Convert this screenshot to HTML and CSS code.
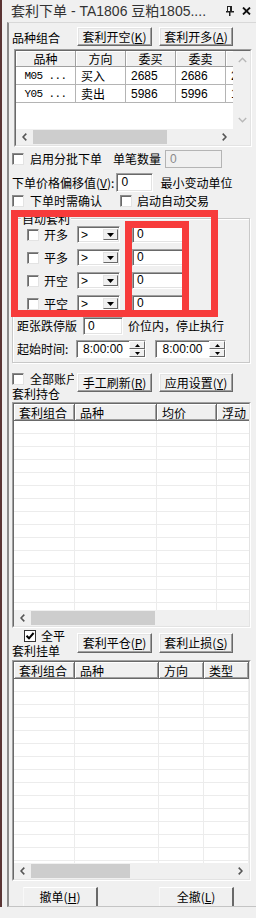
FILE: index.html
```html
<!DOCTYPE html>
<html lang="zh-CN">
<head>
  <meta charset="UTF-8">
  <meta name="viewport" content="width=device-width, initial-scale=1.0">
  <title>套利下单</title>
  <link rel="stylesheet" href="styles.css">
</head>
<body>

  <div class="window">
    <div class="frame">
      <div class="titlebar">
        <span class="title">套利下单 - TA1806 豆粕1805....</span>
        <svg class="pin" width="8" height="10" viewBox="0 0 8 10">
          <rect x="1.5" y="0.5" width="4" height="5" fill="none" stroke="#222"/>
          <rect x="4" y="0" width="2" height="6" fill="#222"/>
          <rect x="0" y="5" width="8" height="1.5" fill="#222"/>
          <rect x="3" y="6" width="1.5" height="4" fill="#222"/>
        </svg>
        <svg class="close" width="9" height="8" viewBox="0 0 9 8">
          <path d="M1 0.5 L8 7.5 M8 0.5 L1 7.5" stroke="#111" stroke-width="1.8"/>
        </svg>
      </div>

      <div class="panel">
        <!-- 品种组合 -->
        <div class="toolbar">
          <span class="caption">品种组合</span>
          <button class="btn">套利开空(<u>K</u>)</button>
          <button class="btn">套利开多(<u>A</u>)</button>
        </div>

        <div class="grid grid-combo">
          <div class="grid-in">
            <div class="list">
              <div class="tr">
                <div class="th center">品种</div>
                <div class="th center">方向</div>
                <div class="th center">委买</div>
                <div class="th center">委卖</div>
                <div class="th"></div>
              </div>
              <div class="tr">
                <div class="td mono center">M05 ...</div>
                <div class="td">买入</div>
                <div class="td num">2685</div>
                <div class="td num">2686</div>
                <div class="td num">2</div>
              </div>
              <div class="tr">
                <div class="td mono center">Y05 ...</div>
                <div class="td">卖出</div>
                <div class="td num">5986</div>
                <div class="td num">5996</div>
                <div class="td num">1</div>
              </div>
            </div>
            <div class="vscroll">
              <svg width="9" height="6" viewBox="0 0 9 6"><polyline points="0.8,5 4.5,1.3 8.2,5" fill="none" stroke="#b8b8b8" stroke-width="1.4"/></svg>
              <svg width="9" height="6" viewBox="0 0 9 6"><polyline points="0.8,1 4.5,4.7 8.2,1" fill="none" stroke="#b8b8b8" stroke-width="1.4"/></svg>
            </div>
            <div class="hscroll">
              <span class="arrow"><svg width="5" height="8" viewBox="0 0 5 8"><polyline points="4.3,0.6 1,4 4.3,7.4" fill="none" stroke="#555" stroke-width="1.6"/></svg></span>
              <span class="track"><span class="thumb" style="width: 134px"></span></span>
              <span class="arrow"><svg width="5" height="8" viewBox="0 0 5 8"><polyline points="0.7,0.6 4,4 0.7,7.4" fill="none" stroke="#555" stroke-width="1.6"/></svg></span>
            </div>
            <div class="corner"></div>
          </div>
        </div>

        <div class="row row-batch">
          <span class="chk"></span>
          <span class="text batch-label">启用分批下单</span>
          <span class="text">单笔数量</span>
          <span class="input disabled batch-input">0</span>
        </div>

        <div class="row row-offset">
          <span class="text">下单价格偏移值(<u>V</u>):</span>
          <span class="input offset-input">0</span>
          <span class="text">最小变动单位</span>
        </div>

        <div class="row row-confirm">
          <span class="check-item confirm-item"><span class="chk"></span><span class="text">下单时需确认</span></span>
          <span class="check-item"><span class="chk"></span><span class="text">启动自动交易</span></span>
        </div>

        <!-- 自动套利 -->
        <div class="group">
          <span class="legend">自动套利</span>
          <div class="arb-row">
            <span class="chk"></span><span class="text arb-label">开多</span>
            <span class="combo"><span class="combo-val">&gt;</span><span class="combo-btn"><svg width="7" height="4" viewBox="0 0 7 4"><path d="M0 0 H7 L3.5 4 Z" fill="#000"/></svg></span></span>
            <span class="input arb-input">0</span>
          </div>
          <div class="arb-row">
            <span class="chk"></span><span class="text arb-label">平多</span>
            <span class="combo"><span class="combo-val">&gt;</span><span class="combo-btn"><svg width="7" height="4" viewBox="0 0 7 4"><path d="M0 0 H7 L3.5 4 Z" fill="#000"/></svg></span></span>
            <span class="input arb-input">0</span>
          </div>
          <div class="arb-row">
            <span class="chk"></span><span class="text arb-label">开空</span>
            <span class="combo"><span class="combo-val">&gt;</span><span class="combo-btn"><svg width="7" height="4" viewBox="0 0 7 4"><path d="M0 0 H7 L3.5 4 Z" fill="#000"/></svg></span></span>
            <span class="input arb-input">0</span>
          </div>
          <div class="arb-row">
            <span class="chk"></span><span class="text arb-label">平空</span>
            <span class="combo"><span class="combo-val">&gt;</span><span class="combo-btn"><svg width="7" height="4" viewBox="0 0 7 4"><path d="M0 0 H7 L3.5 4 Z" fill="#000"/></svg></span></span>
            <span class="input arb-input">0</span>
          </div>
          <div class="row row-limit">
            <span class="text limit-label">距张跌停版</span>
            <span class="input limit-input">0</span>
            <span class="text">价位内，停止执行</span>
          </div>
          <div class="row row-time">
            <span class="text time-label">起始时间:</span>
            <span class="spin">
              <span class="spin-val">8:00:00</span>
              <span class="spin-btns">
                <span class="spin-btn"><svg width="5" height="3" viewBox="0 0 5 3"><path d="M0 3 H5 L2.5 0 Z" fill="#000"/></svg></span>
                <span class="spin-btn"><svg width="5" height="3" viewBox="0 0 5 3"><path d="M0 0 H5 L2.5 3 Z" fill="#000"/></svg></span>
              </span>
            </span>
            <span class="spin spin-end">
              <span class="spin-val">8:00:00</span>
              <span class="spin-btns">
                <span class="spin-btn"><svg width="5" height="3" viewBox="0 0 5 3"><path d="M0 3 H5 L2.5 0 Z" fill="#000"/></svg></span>
                <span class="spin-btn"><svg width="5" height="3" viewBox="0 0 5 3"><path d="M0 0 H5 L2.5 3 Z" fill="#000"/></svg></span>
              </span>
            </span>
          </div>
        </div>

        <!-- 套利持仓 -->
        <div class="section-bar bar-hold">
          <div class="side">
            <div class="side-line"><span class="chk"></span><span class="text clip">全部账户</span></div>
            <div class="side-title">套利持仓</div>
          </div>
          <button class="btn">手工刷新(<u>R</u>)</button>
          <button class="btn">应用设置(<u>Y</u>)</button>
        </div>

        <div class="grid grid-table grid-hold">
          <div class="grid-in">
            <div class="tr">
              <div class="th">套利组合</div>
              <div class="th">品种</div>
              <div class="th">均价</div>
              <div class="th">浮动</div>
            </div>
            <div class="rows" data-rows="15" data-cols="4"></div>
            <div class="hscroll">
              <span class="arrow"><svg width="5" height="8" viewBox="0 0 5 8"><polyline points="4.3,0.6 1,4 4.3,7.4" fill="none" stroke="#555" stroke-width="1.6"/></svg></span>
              <span class="track"><span class="thumb" style="width: 124px"></span></span>
              <span class="arrow"><svg width="5" height="8" viewBox="0 0 5 8"><polyline points="0.7,0.6 4,4 0.7,7.4" fill="none" stroke="#555" stroke-width="1.6"/></svg></span>
            </div>
          </div>
        </div>

        <!-- 套利挂单 -->
        <div class="section-bar bar-order">
          <div class="side">
            <div class="side-line indent"><span class="chk checked"><svg width="10" height="10" viewBox="0 0 10 10"><path d="M1.5 4.8 L4 7.3 L8.6 2" fill="none" stroke="#000" stroke-width="2"/></svg></span><span class="text">全平</span></div>
            <div class="side-title">套利挂单</div>
          </div>
          <button class="btn btn-tall">套利平仓(<u>P</u>)</button>
          <button class="btn btn-tall">套利止损(<u>S</u>)</button>
        </div>

        <div class="grid grid-table grid-order">
          <div class="grid-in">
            <div class="tr">
              <div class="th">套利组合</div>
              <div class="th">品种</div>
              <div class="th">方向</div>
              <div class="th">类型</div>
            </div>
            <div class="rows" data-rows="15" data-cols="4"></div>
            <div class="hscroll">
              <span class="arrow"><svg width="5" height="8" viewBox="0 0 5 8"><polyline points="4.3,0.6 1,4 4.3,7.4" fill="none" stroke="#555" stroke-width="1.6"/></svg></span>
              <span class="track"><span class="thumb" style="width: 99px"></span></span>
              <span class="arrow"><svg width="5" height="8" viewBox="0 0 5 8"><polyline points="0.7,0.6 4,4 0.7,7.4" fill="none" stroke="#555" stroke-width="1.6"/></svg></span>
            </div>
          </div>
        </div>

        <div class="footer">
          <button class="btn btn-flat">撤单(<u>H</u>)</button>
          <button class="btn btn-flat">全撤(<u>L</u>)</button>
        </div>
      </div>
    </div>

    <!-- red marks drawn over the screenshot -->
    <div class="mark mark-outer"></div>
    <div class="mark mark-inner"></div>
  </div>

  <script>
    // Fill the empty grids with blank rows
    document.querySelectorAll('.rows').forEach(function (body) {
      const rows = parseInt(body.dataset.rows);
      const cols = parseInt(body.dataset.cols);
      for (let r = 0; r < rows; r++) {
        const tr = document.createElement('div');
        tr.className = 'tr';
        for (let c = 0; c < cols; c++) {
          const td = document.createElement('div');
          td.className = 'td';
          tr.appendChild(td);
        }
        body.appendChild(tr);
      }
    });
  </script>

</body>
</html>
```

FILE: styles.css
```css
* {
  box-sizing: border-box;
}
body {
  margin: 0;
  background-color: #f0f0f0;
  font-family: "Noto Sans CJK SC", sans-serif;
  font-size: 12px;
  line-height: 14px;
  color: #000;
}
u {
  text-decoration: underline;
}
.window {
  position: relative;
  width: 256px;
  height: 918px;
  overflow: hidden;
}
.frame {
  height: 907px;
  border-left: 2px solid #5a3434;
  display: flex;
  flex-direction: column;
}
.titlebar {
  height: 22px;
  display: flex;
  align-items: center;
  padding-left: 9px;
  font-family: "Liberation Sans", "Noto Sans CJK SC", sans-serif;
  font-size: 14px;
  line-height: 16px;
  color: #333;
}
.title {
  flex: 1;
  white-space: nowrap;
  overflow: hidden;
}
.pin {
  margin-right: 8px;
}
.close {
  margin-right: 5px;
}
.panel {
  flex: 1;
  margin-left: 5px;
  border-left: 2px solid #8c8c8c;
  border-top: 1px solid #d8d8d8;
  border-bottom: 1px solid #c4c4c4;
  padding-left: 3px;
  display: flex;
  flex-direction: column;
}

/* buttons */
.btn {
  width: 75px;
  height: 19px;
  padding: 0;
  font: inherit;
  color: #000;
  background-color: #f0f0f0;
  border: 1px solid;
  border-color: #fff #696969 #696969 #fff;
  box-shadow: inset -1px -1px #a0a0a0, inset 1px 1px #e3e3e3;
  white-space: nowrap;
}
.btn + .btn {
  margin-left: 7px;
  width: 74px;
}
.btn-tall {
  height: 20px;
}

/* small controls */
.text {
  white-space: nowrap;
}
.chk {
  display: inline-flex;
  align-items: center;
  justify-content: center;
  flex: none;
  width: 12px;
  height: 12px;
  background-color: #fff;
  border: 1px solid;
  border-color: #8a8a8a #e3e3e3 #e3e3e3 #8a8a8a;
  box-shadow: inset 1px 1px #6a6a6a;
}
.input {
  display: inline-block;
  height: 18px;
  padding: 1px 0 0 4px;
  background-color: #fff;
  border: 1px solid;
  border-color: #a0a0a0 #fff #fff #a0a0a0;
  box-shadow: inset 1px 1px #696969, inset -1px -1px #e3e3e3;
  font-family: "Liberation Sans", sans-serif;
}
.input.disabled {
  background-color: #f0f0f0;
  color: #8a8a8a;
  border-color: #b4b4b4;
  box-shadow: none;
}

/* toolbar */
.toolbar {
  display: flex;
  align-items: center;
  height: 19px;
  margin-top: 4px;
}
.caption {
  width: 65px;
  padding-top: 3px;
}

/* grids */
.grid {
  border: 1px solid;
  border-color: #a0a0a0 #fff #fff #a0a0a0;
}
.grid-in {
  height: 100%;
  background-color: #fff;
  border: 1px solid;
  border-color: #696969 #e3e3e3 #e3e3e3 #696969;
  overflow: hidden;
}
.tr {
  display: grid;
}
.th {
  height: 16px;
  padding-left: 5px;
  line-height: 15px;
  background-color: #f0f0f0;
  border-right: 1px solid #696969;
  border-bottom: 1px solid #696969;
  box-shadow: inset 1px 1px #fff, inset -1px -1px #a0a0a0;
  white-space: nowrap;
  overflow: hidden;
}
.th.center {
  padding-left: 0;
  text-align: center;
}
.td {
  height: 13px;
  border-right: 1px solid #ececec;
  border-bottom: 1px solid #ececec;
}

.grid-combo {
  width: 238px;
  height: 98px;
  margin-top: 3px;
  margin-left: 2px;
}
.grid-combo .grid-in {
  display: grid;
  grid-template-columns: 1fr 17px;
  grid-template-rows: 1fr 16px;
}
.grid-combo .tr {
  grid-template-columns: 60px 50px 50px 50px 30px;
}
.grid-combo .th {
  height: 16px;
  border-right-color: #a0a0a0;
  border-bottom-color: #a0a0a0;
  box-shadow: inset 1px 1px #fff;
}
.grid-combo .td {
  height: 18px;
  padding: 2px 0 0 5px;
  border-color: #b4b4b4;
}
.grid-combo .td.center {
  padding-left: 0;
  text-align: center;
}
.list {
  overflow: hidden;
}
.mono {
  font-family: "Liberation Mono", monospace;
  font-size: 11px;
  letter-spacing: -0.6px;
}
.num {
  font-family: "Liberation Sans", sans-serif;
  font-size: 12px;
}
.vscroll {
  background-color: #f0f0f0;
  display: flex;
  flex-direction: column;
  align-items: center;
  justify-content: space-between;
  padding: 6px 0 6px 1px;
}
.corner {
  background-color: #f0f0f0;
}
.hscroll {
  display: flex;
  height: 16px;
  background-color: #f0f0f0;
}
.arrow {
  width: 17px;
  display: flex;
  align-items: center;
  justify-content: center;
  flex: none;
}
.track {
  flex: 1;
  padding: 1px 0;
}
.thumb {
  display: block;
  height: 100%;
  background-color: #cdcdcd;
}

.grid-table {
  width: 239px;
  margin-left: 0;
}
.grid-table .grid-in {
  display: grid;
  grid-template-rows: 17px 1fr 16px;
}
.grid-table .th {
  height: 17px;
  padding-top: 1px;
}
.rows {
  overflow: hidden;
}
.grid-hold {
  height: 226px;
}
.grid-hold .tr {
  grid-template-columns: 61px 82px 60px 60px;
}
.grid-order {
  height: 221px;
}
.grid-order .tr {
  grid-template-columns: 61px 84px 45px 45px;
}

/* option rows */
.row {
  display: flex;
  align-items: center;
}
.row-batch {
  height: 18px;
  margin-top: 3px;
}
.batch-label {
  margin-left: 6px;
  width: 83px;
}
.batch-input {
  width: 57px;
  margin-left: 4px;
}
.row-offset {
  height: 19px;
  margin-top: 5px;
}
.offset-input {
  width: 37px;
  height: 19px;
  margin-left: 2px;
  margin-right: 7px;
}
.row-confirm {
  height: 16px;
  margin-top: 1px;
}
.check-item {
  display: flex;
  align-items: center;
}
.check-item .text {
  margin-left: 6px;
}
.confirm-item {
  width: 108px;
}
.check-item + .check-item .text {
  margin-left: 5px;
}

/* group box */
.group {
  position: relative;
  width: 238px;
  height: 145px;
  margin-top: 9px;
  padding: 7px 0 0 4px;
  border: 1px solid #c8c8c8;
  box-shadow: inset 1px 1px #fff, 1px 1px #fff;
}
.legend {
  position: absolute;
  top: -7px;
  left: 8px;
  padding: 0 1px;
  background-color: #f0f0f0;
}
.arb-row {
  display: flex;
  align-items: center;
  height: 17px;
  margin: 0 0 6px 10px;
}
.arb-row:nth-child(5) {
  margin-bottom: 0;
}
.arb-label {
  width: 33px;
  margin-left: 5px;
}
.combo {
  display: flex;
  width: 43px;
  height: 17px;
  padding: 2px;
  background-color: #fff;
  border: 1px solid;
  border-color: #a0a0a0 #fff #fff #a0a0a0;
  box-shadow: inset 1px 1px #696969, inset -1px -1px #e3e3e3;
}
.combo-val {
  flex: 1;
  font-family: "Liberation Sans", sans-serif;
  line-height: 12px;
  padding-left: 1px;
}
.combo-btn {
  width: 15px;
  display: flex;
  align-items: center;
  justify-content: center;
  background-color: #f0f0f0;
  border: 1px solid;
  border-color: #e3e3e3 #696969 #696969 #e3e3e3;
  margin-right: -1px;
}
.arb-input {
  width: 55px;
  height: 17px;
  margin-left: 12px;
  padding-top: 0;
}
.row-limit {
  height: 18px;
  margin-top: 5px;
}
.limit-label {
  width: 66px;
}
.limit-input {
  width: 40px;
  margin-right: 5px;
}
.row-time {
  height: 18px;
  margin-top: 5px;
}
.time-label {
  width: 59px;
}
.spin {
  display: flex;
  width: 70px;
  height: 18px;
  background-color: #fff;
  border: 1px solid;
  border-color: #a0a0a0 #fff #fff #a0a0a0;
  box-shadow: inset 1px 1px #696969;
}
.spin-end {
  width: 71px;
  margin-left: 9px;
}
.spin-val {
  flex: 1;
  text-align: center;
  font-family: "Liberation Sans", sans-serif;
  padding-top: 1px;
}
.spin-btns {
  width: 16px;
  display: flex;
  flex-direction: column;
}
.spin-btn {
  flex: 1;
  display: flex;
  align-items: center;
  justify-content: center;
  background-color: #f0f0f0;
  border: 1px solid;
  border-color: #fff #696969 #696969 #fff;
}

/* bars above the lower grids */
.section-bar {
  display: flex;
  align-items: flex-start;
}
.side {
  width: 65px;
}
.side-line {
  display: flex;
  align-items: center;
  height: 14px;
}
.side-line .text {
  margin-left: 6px;
}
.clip {
  width: 44px;
  overflow: hidden;
}
.side-title {
  height: 15px;
  line-height: 15px;
}
.bar-hold {
  height: 30px;
  margin-top: 9px;
}
.bar-hold .btn {
  margin-top: 1px;
}
.bar-order {
  height: 32px;
}
.bar-order .side-line {
  margin-top: 1px;
}
.bar-order .btn {
  margin-top: 5px;
}
.indent {
  padding-left: 12px;
}
.indent .text {
  margin-left: 5px;
}
.chk.checked {
  border-color: #333;
  box-shadow: none;
}

/* footer */
.footer {
  display: flex;
  margin-top: 6px;
}
.btn-flat {
  margin-left: 11px;
  border-bottom: none;
  border-color: #fff #696969 #696969 #f8f8f8;
  border-right-width: 2px;
  box-shadow: none;
}
.btn-flat + .btn-flat {
  margin-left: 61px;
  width: 75px;
}

/* red annotation boxes */
.mark {
  position: absolute;
  border: 7px solid #f73b3b;
}
.mark-outer {
  left: 11px;
  top: 210px;
  width: 207px;
  height: 107px;
}
.mark-inner {
  left: 125px;
  top: 221px;
  width: 64px;
  height: 96px;
}
```
